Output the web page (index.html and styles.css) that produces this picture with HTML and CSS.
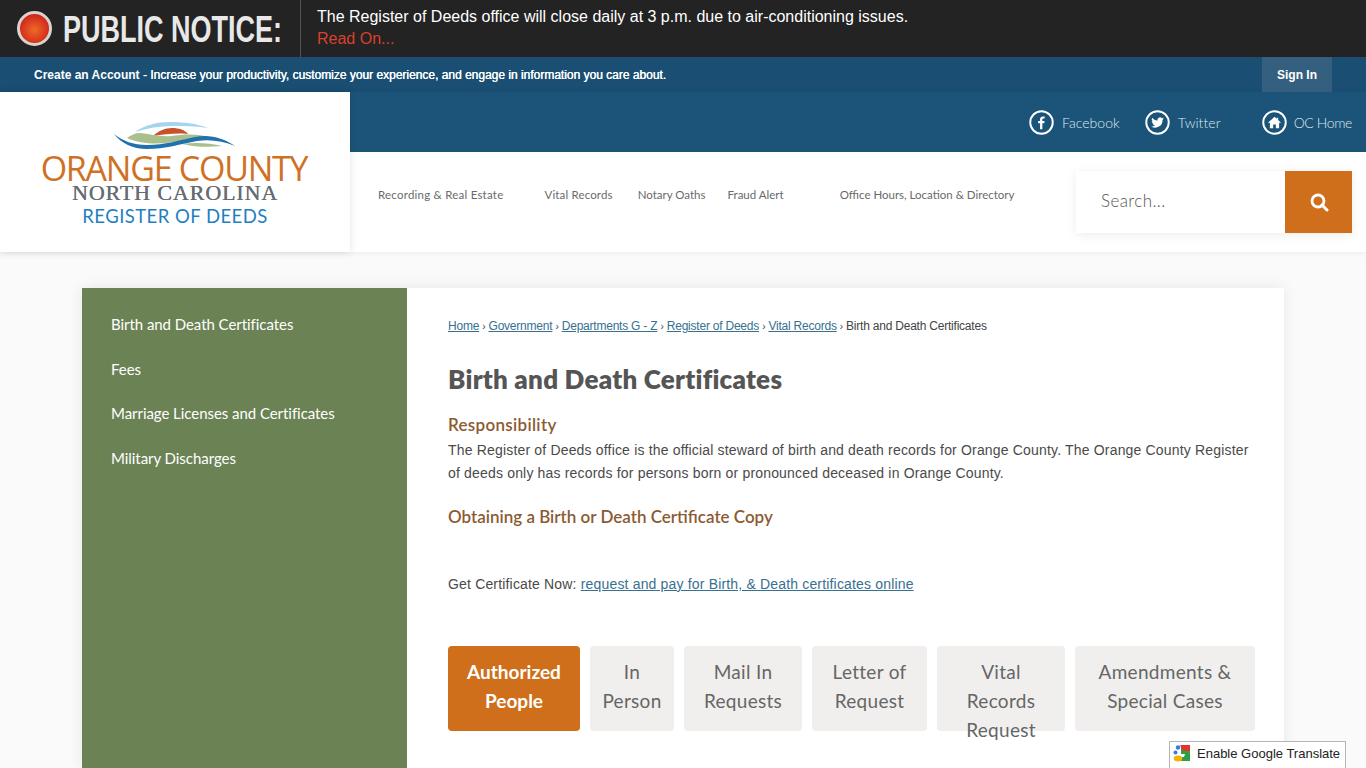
FILE: index.html
```html
<!DOCTYPE html>
<html lang="en">
<head>
    <meta charset="UTF-8">
    <meta name="viewport" content="width=device-width, initial-scale=1.0">
    <title>Birth and Death Certificates | Orange County Register of Deeds</title>
    <link rel="stylesheet" href="styles.css">
</head>
<body>
    <div class="notice">
        <div class="notice-title">
            <span class="notice-light"></span>
            <span class="notice-word">PUBLIC NOTICE:</span>
        </div>
        <div class="notice-body">
            <p>The Register of Deeds office will close daily at 3 p.m. due to air-conditioning issues.</p>
            <a href="#">Read On...</a>
        </div>
    </div>

    <div class="account-bar">
        <p><strong>Create an Account</strong> - Increase your productivity, customize your experience, and engage in information you care about.</p>
        <a class="sign-in" href="#">Sign In</a>
    </div>

    <div class="header">
        <a class="logo" href="#">
            <svg class="logo-mark" width="140" height="40" viewBox="0 0 140 40">
                <path d="M30 17C40 10 52 7 65 7c15 0 28 2 38 6-13-2-25-2-35-2-13 0-26 2-38 6z" fill="#a6d4ec"/>
                <path d="M48 21c5-5 12-8 19-8s13 2 16 6c-11-1-23 0-35 2z" fill="#c8522a"/>
                <path d="M22 23c4-3 8-5 13-5 10 1 20 4 31 3 14-2 29-3 44 3-12-2-22-1-32 1-16 4-38 6-56-2z" fill="#a9c08d"/>
                <path d="M77 29c13-2 28-1 40 2-13 1.500-27 1-40-2z" fill="#a9c08d"/>
                <path d="M9 19c9 7 19 11 33 11 18 0 33-5 48-8 15-3 28 1 40 9-12-5-25-7-38-5-16 3-32 8-50 8-14 0-26-6-33-15z" fill="#1f72ad"/>
            </svg>
            <span class="logo-county">ORANGE COUNTY</span>
            <span class="logo-state">NORTH CAROLINA</span>
            <span class="logo-dept">REGISTER OF DEEDS</span>
        </a>
        <div class="header-right">
            <div class="social-bar">
                <a class="social social-fb" href="#">
                    <svg width="25" height="25" viewBox="0 0 26 26"><circle cx="13" cy="13" r="11.700" fill="none" stroke="#fff" stroke-width="2"/><path d="M13.900 20v-6.200h2l.3-2.400h-2.300V10c0-.7.2-1.100 1.200-1.100h1.200V6.800c-.3 0-1-.1-1.800-.1-1.800 0-3 1.100-3 3.100v1.600h-2v2.400h2V20z" fill="#fff"/></svg>
                    Facebook
                </a>
                <a class="social social-tw" href="#">
                    <svg width="25" height="25" viewBox="0 0 26 26"><circle cx="13" cy="13" r="11.700" fill="none" stroke="#fff" stroke-width="2"/><path d="M19.500 8.800c-.5.2-1 .4-1.500.4.600-.3 1-.8 1.200-1.400-.5.300-1.100.5-1.700.7a2.700 2.700 0 0 0-4.600 2.400c-2.200-.1-4.200-1.200-5.500-2.800-.7 1.200-.4 2.800.8 3.600-.4 0-.8-.1-1.200-.3 0 1.300.9 2.400 2.100 2.700-.4.100-.8.100-1.200 0 .3 1.100 1.300 1.800 2.500 1.900A5.400 5.400 0 0 1 6.500 17.100a7.600 7.600 0 0 0 11.700-6.800c.5-.4 1-.9 1.300-1.500z" fill="#fff"/></svg>
                    Twitter
                </a>
                <a class="social social-home" href="#">
                    <svg width="25" height="25" viewBox="0 0 26 26"><circle cx="13" cy="13" r="11.700" fill="none" stroke="#fff" stroke-width="2"/><path d="M13 7l-6.500 6 .8.800.9-.8V19h3.400v-3.800h2.800V19h3.400v-6l.9.800.8-.8-2.700-2.500V8h-1.500v1.100z" fill="#fff"/></svg>
                    OC Home
                </a>
            </div>
            <div class="nav-row">
                <ul class="nav">
                    <li class="nav-recording"><a href="#">Recording &amp; Real Estate</a></li>
                    <li class="nav-vital"><a href="#">Vital Records</a></li>
                    <li class="nav-notary"><a href="#">Notary Oaths</a></li>
                    <li class="nav-fraud"><a href="#">Fraud Alert</a></li>
                    <li class="nav-office"><a href="#">Office Hours, Location &amp; Directory</a></li>
                </ul>
                <form class="search">
                    <span class="search-input">Search...</span>
                    <button class="search-btn" type="button" aria-label="Search">
                        <svg width="20" height="20" viewBox="0 0 20 20"><circle cx="9" cy="9" r="6" fill="none" stroke="#fff" stroke-width="2.800"/><path d="M13 13l5 5" stroke="#fff" stroke-width="3" stroke-linecap="round"/></svg>
                    </button>
                </form>
            </div>
        </div>
    </div>

    <div class="main">
        <ul class="side-nav">
            <li><a href="#">Birth and Death Certificates</a></li>
            <li><a href="#">Fees</a></li>
            <li><a href="#">Marriage Licenses and Certificates</a></li>
            <li><a href="#">Military Discharges</a></li>
        </ul>
        <div class="content">
            <div class="breadcrumb">
                <a href="#">Home</a> <i>›</i> <a href="#">Government</a> <i>›</i> <a href="#">Departments G - Z</a> <i>›</i> <a href="#">Register of Deeds</a> <i>›</i> <a href="#">Vital Records</a> <i>›</i> Birth and Death Certificates
            </div>
            <h1>Birth and Death Certificates</h1>
            <h2 class="responsibility">Responsibility</h2>
            <p class="lead">The Register of Deeds office is the official steward of birth and death records for Orange County. The Orange County Register of deeds only has records for persons born or pronounced deceased in Orange County.</p>
            <h2 class="obtain">Obtaining a Birth or Death Certificate Copy</h2>
            <p class="get-now">Get Certificate Now: <a href="#">request and pay for Birth, &amp; Death certificates online</a></p>
            <div class="tabs">
                <a class="tab tab-active tab-authorized" href="#">Authorized People</a>
                <a class="tab tab-person" href="#">In Person</a>
                <a class="tab tab-mail" href="#">Mail In Requests</a>
                <a class="tab tab-letter" href="#">Letter of Request</a>
                <a class="tab tab-vital" href="#">Vital Records Request</a>
                <a class="tab tab-amend" href="#">Amendments &amp; Special Cases</a>
            </div>
        </div>
    </div>

    <div class="translate">
        <svg width="17" height="18" viewBox="0 0 17 18">
            <rect x="8" y="1" width="9" height="16" fill="#2f9e44"/>
            <path d="M7 1h10v6h-7z" fill="#e5352b"/>
            <path d="M8 10h4l-1 3H8z" fill="#fff"/>
            <circle cx="5" cy="3.500" r="2.200" fill="#3b78e7"/>
            <circle cx="2.500" cy="8.500" r="2" fill="#3b78e7"/>
            <ellipse cx="5" cy="14.500" rx="4.300" ry="3" fill="#f4b400"/>
        </svg>
        Enable Google Translate
    </div>
</body>
</html>
```

FILE: styles.css
```css
html, body {
    margin: 0;
    height: 768px;
    overflow: hidden;
}
body {
    font-family: "Liberation Sans", Arial, sans-serif;
    background-color: #fafafa;
    color: #444;
}
a { color: inherit; }
p { margin: 0; }
ul { margin: 0; padding: 0; list-style: none; }

/* public notice */
.notice {
    display: flex;
    height: 57px;
    background: #232323;
    color: #fff;
}
.notice-title {
    flex: none;
    display: flex;
    align-items: center;
    width: 300px;
    border-right: 1px solid #555;
    overflow: hidden;
}
.notice-light {
    flex: none;
    width: 35px;
    height: 35px;
    margin-left: 17px;
    border: 3px solid #d9d3cb;
    border-radius: 50%;
    box-sizing: border-box;
    background: radial-gradient(circle at 50% 55%, #ef6a28, #d0281c 70%, #a81c14);
}
.notice-word {
    flex: none;
    margin: 2px 0 0 11px;
    font-size: 37px;
    font-weight: bold;
    color: #e8e8e8;
    white-space: nowrap;
    transform: scaleX(0.73);
    transform-origin: left center;
}
.notice-body {
    padding: 6px 0 0 16px;
    font-size: 16px;
    line-height: 22px;
}
.notice-body a {
    color: #d9412b;
    text-decoration: none;
}

/* account bar */
.account-bar {
    display: flex;
    justify-content: space-between;
    height: 35px;
    padding: 0 34px;
    background: #1a4f73;
    color: #fff;
    font-size: 12px;
    line-height: 36px;
}
.account-bar p {
    text-shadow: 0.3px 0 0 #fff;
    letter-spacing: -0.01px;
}
.account-bar strong { letter-spacing: 0; text-shadow: none; }
.sign-in {
    width: 70px;
    background: #345f7f;
    font-weight: bold;
    text-align: center;
    text-decoration: none;
}

/* header */
.header {
    display: flex;
    height: 160px;
    background: #fff;
    box-shadow: 0 1px 6px rgba(0,0,0,0.06);
}
.logo {
    position: relative;
    z-index: 1;
    display: flex;
    flex-direction: column;
    align-items: center;
    width: 350px;
    padding-top: 23px;
    box-sizing: border-box;
    background: #fff;
    box-shadow: 0 0 8px rgba(0,0,0,0.12);
    text-decoration: none;
}
.logo-mark { display: block; }
.logo-county {
    margin: -1px 2px 0 0;
    font-family: "Open Sans", sans-serif;
    font-size: 34px;
    line-height: 28px;
    letter-spacing: -1.250px;
    color: #cf7124;
    white-space: nowrap;
}
.logo-state {
    margin-top: 2px;
    font-family: "Liberation Serif", serif;
    font-size: 22px;
    line-height: 17px;
    letter-spacing: 0.9px;
    color: #666c72;
    text-shadow: 0.3px 0 0 #666c72;
    white-space: nowrap;
}
.logo-dept {
    margin-top: 5px;
    font-family: Lato, sans-serif;
    font-size: 18.500px;
    line-height: 20px;
    letter-spacing: 0.45px;
    color: #1f7fc0;
    white-space: nowrap;
}
.header-right {
    flex: 1;
    display: flex;
    flex-direction: column;
}
.social-bar {
    display: flex;
    align-items: center;
    height: 60px;
    background: #1b5478;
    color: #dfe9f0;
    font-family: Lato, sans-serif;
    font-weight: 300;
    font-size: 14px;
    letter-spacing: 0.05px;
}
.social {
    display: flex;
    align-items: center;
    gap: 8px;
    text-decoration: none;
}
.social-fb { margin-left: 679px; }
.social-tw { margin-left: 24px; }
.social-tw svg { margin-left: 1px; }
.social-home { margin-left: 41px; gap: 7px; letter-spacing: -0.4px; }
.nav-row {
    flex: 1;
    display: flex;
    align-items: center;
    justify-content: space-between;
    padding-right: 14px;
}
.nav {
    display: flex;
    font-family: Lato, sans-serif;
    font-size: 11.500px;
    color: #6a6a6a;
    margin-top: -16px;
}
.nav a { text-decoration: none; }
.nav li { white-space: nowrap; }
.nav-recording { margin-left: 28px; letter-spacing: 0.23px; }
.nav-vital { margin-left: 41px; letter-spacing: 0.15px; }
.nav-notary { margin-left: 25px; }
.nav-fraud { margin-left: 22px; }
.nav-office { margin-left: 56px; }
.search {
    display: flex;
    width: 276px;
    height: 62px;
    background: #fff;
    box-shadow: 0 2px 10px rgba(0,0,0,0.08);
}
.search-input {
    flex: 1;
    padding-left: 25px;
    font-family: Lato, sans-serif;
    font-weight: 300;
    font-size: 17px;
    letter-spacing: 0.4px;
    line-height: 60px;
    color: #555;
}
.search-btn {
    width: 67px;
    border: none;
    background: #cf6f1b;
    display: flex;
    align-items: center;
    justify-content: center;
    padding: 0;
}

/* main */
.main {
    display: flex;
    width: 1202px;
    height: 480px;
    margin: 36px 0 0 82px;
    background: #fff;
    box-shadow: 0 0 14px rgba(0,0,0,0.08);
}
.side-nav {
    width: 325px;
    padding: 14px 0 0 29px;
    box-sizing: border-box;
    background: #6b8255;
    color: #fff;
    font-family: Lato, sans-serif;
    font-size: 15px;
    letter-spacing: -0.05px;
}
.side-nav li {
    height: 44.600px;
    line-height: 44px;
}
.side-nav a { text-decoration: none; }
.content {
    flex: 1;
    padding: 30px 29px 0 41px;
}
.breadcrumb {
    font-size: 12px;
    line-height: 16px;
    letter-spacing: -0.22px;
    color: #444;
}
.breadcrumb a { color: #38708f; }
.breadcrumb i { font-style: normal; font-size: 10px; }
h1 {
    margin: 27px 0 0;
    font-family: Lato, sans-serif;
    font-size: 26px;
    line-height: 34px;
    letter-spacing: 0.25px;
    font-weight: 800;
    color: #555;
}
h2 {
    margin: 0;
    font-family: Lato, sans-serif;
    font-size: 17px;
    font-weight: 600;
    color: #8c5a32;
}
.responsibility {
    margin-top: 17px;
    line-height: 24px;
    letter-spacing: 0.3px;
}
.lead {
    margin-top: 2px;
    font-size: 14px;
    line-height: 23px;
    letter-spacing: 0.175px;
    color: #4a4a4a;
}
.obtain {
    margin-top: 20px;
    line-height: 24px;
}
.get-now {
    margin-top: 45px;
    font-size: 14px;
    line-height: 20px;
    letter-spacing: 0.17px;
    color: #4a4a4a;
}
.get-now a { color: #38708f; }
.tabs {
    display: flex;
    gap: 10px;
    margin-top: 52px;
}
.tab {
    height: 85px;
    padding: 11px 10px 0;
    box-sizing: border-box;
    border-radius: 4px;
    background: #f0efee;
    color: #666;
    font-family: Lato, sans-serif;
    font-size: 19px;
    line-height: 29px;
    letter-spacing: 0.3px;
    text-align: center;
    text-decoration: none;
}
.tab-active {
    background: #cf6f1b;
    color: #fff;
    font-weight: bold;
    letter-spacing: 0;
}
.tab-authorized { width: 132px; }
.tab-person { width: 84px; }
.tab-mail { width: 118px; }
.tab-letter { width: 115px; }
.tab-vital { width: 128px; padding-left: 24px; padding-right: 24px; }
.tab-amend { width: 180px; }

/* translate widget */
.translate {
    position: fixed;
    top: 741px;
    left: 1169px;
    display: flex;
    align-items: center;
    gap: 7px;
    width: 177px;
    height: 27px;
    padding: 0 0 4px 3px;
    box-sizing: border-box;
    border: 1px solid #b5b5b5;
    border-bottom: none;
    background: #fff;
    color: #222;
    font-size: 13px;
    white-space: nowrap;
}
```
